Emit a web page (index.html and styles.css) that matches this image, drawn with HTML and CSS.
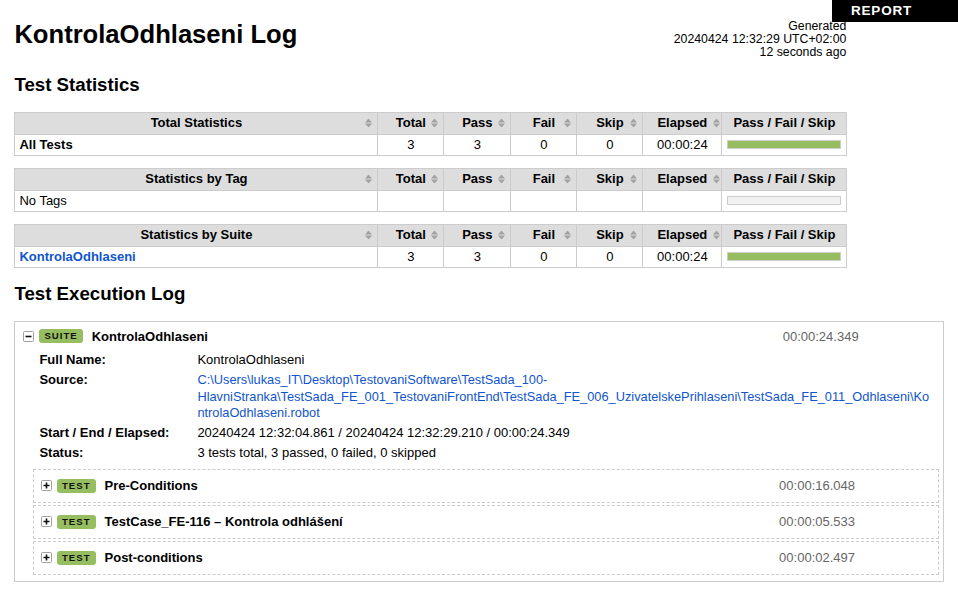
FILE: index.html
```html
<!DOCTYPE html>
<html lang="en">
<head>
<meta charset="utf-8">
<title>KontrolaOdhlaseni Log</title>
<link rel="stylesheet" href="styles.css">
</head>
<body>
<div class="top-right"><a class="report-link" href="#">REPORT</a></div>

<div class="header">
  <h1 class="title">KontrolaOdhlaseni Log</h1>
  <div class="generated">Generated<br>20240424 12:32:29 UTC+02:00<br>12 seconds ago</div>
</div>

<h2 class="section-title">Test Statistics</h2>

<table class="statistics">
  <colgroup><col class="c-name"><col class="c-stat"><col class="c-stat2"><col class="c-stat"><col class="c-stat"><col class="c-elapsed"><col class="c-graph"></colgroup>
  <thead>
    <tr>
      <th>Total Statistics<svg class="sort" viewBox="0 0 7 9" width="7" height="9"><path d="M0 4 L3.5 0 L7 4 Z M0 5 L3.5 9 L7 5 Z"/></svg></th>
      <th>Total<svg class="sort" viewBox="0 0 7 9" width="7" height="9"><path d="M0 4 L3.5 0 L7 4 Z M0 5 L3.5 9 L7 5 Z"/></svg></th>
      <th>Pass<svg class="sort" viewBox="0 0 7 9" width="7" height="9"><path d="M0 4 L3.5 0 L7 4 Z M0 5 L3.5 9 L7 5 Z"/></svg></th>
      <th>Fail<svg class="sort" viewBox="0 0 7 9" width="7" height="9"><path d="M0 4 L3.5 0 L7 4 Z M0 5 L3.5 9 L7 5 Z"/></svg></th>
      <th>Skip<svg class="sort" viewBox="0 0 7 9" width="7" height="9"><path d="M0 4 L3.5 0 L7 4 Z M0 5 L3.5 9 L7 5 Z"/></svg></th>
      <th>Elapsed<svg class="sort sort-tight" viewBox="0 0 7 9" width="7" height="9"><path d="M0 4 L3.5 0 L7 4 Z M0 5 L3.5 9 L7 5 Z"/></svg></th>
      <th>Pass / Fail / Skip</th>
    </tr>
  </thead>
  <tbody>
    <tr>
      <td class="stat-name bold">All Tests</td>
      <td class="num">3</td><td class="num">3</td><td class="num">0</td><td class="num">0</td><td class="num">00:00:24</td>
      <td><div class="graph"><div class="pass-bar"></div></div></td>
    </tr>
  </tbody>
</table>

<table class="statistics">
  <colgroup><col class="c-name"><col class="c-stat"><col class="c-stat2"><col class="c-stat"><col class="c-stat"><col class="c-elapsed"><col class="c-graph"></colgroup>
  <thead>
    <tr>
      <th>Statistics by Tag<svg class="sort" viewBox="0 0 7 9" width="7" height="9"><path d="M0 4 L3.5 0 L7 4 Z M0 5 L3.5 9 L7 5 Z"/></svg></th>
      <th>Total<svg class="sort" viewBox="0 0 7 9" width="7" height="9"><path d="M0 4 L3.5 0 L7 4 Z M0 5 L3.5 9 L7 5 Z"/></svg></th>
      <th>Pass<svg class="sort" viewBox="0 0 7 9" width="7" height="9"><path d="M0 4 L3.5 0 L7 4 Z M0 5 L3.5 9 L7 5 Z"/></svg></th>
      <th>Fail<svg class="sort" viewBox="0 0 7 9" width="7" height="9"><path d="M0 4 L3.5 0 L7 4 Z M0 5 L3.5 9 L7 5 Z"/></svg></th>
      <th>Skip<svg class="sort" viewBox="0 0 7 9" width="7" height="9"><path d="M0 4 L3.5 0 L7 4 Z M0 5 L3.5 9 L7 5 Z"/></svg></th>
      <th>Elapsed<svg class="sort sort-tight" viewBox="0 0 7 9" width="7" height="9"><path d="M0 4 L3.5 0 L7 4 Z M0 5 L3.5 9 L7 5 Z"/></svg></th>
      <th>Pass / Fail / Skip</th>
    </tr>
  </thead>
  <tbody>
    <tr>
      <td class="stat-name">No Tags</td>
      <td></td><td></td><td></td><td></td><td></td>
      <td><div class="graph empty"></div></td>
    </tr>
  </tbody>
</table>

<table class="statistics">
  <colgroup><col class="c-name"><col class="c-stat"><col class="c-stat2"><col class="c-stat"><col class="c-stat"><col class="c-elapsed"><col class="c-graph"></colgroup>
  <thead>
    <tr>
      <th>Statistics by Suite<svg class="sort" viewBox="0 0 7 9" width="7" height="9"><path d="M0 4 L3.5 0 L7 4 Z M0 5 L3.5 9 L7 5 Z"/></svg></th>
      <th>Total<svg class="sort" viewBox="0 0 7 9" width="7" height="9"><path d="M0 4 L3.5 0 L7 4 Z M0 5 L3.5 9 L7 5 Z"/></svg></th>
      <th>Pass<svg class="sort" viewBox="0 0 7 9" width="7" height="9"><path d="M0 4 L3.5 0 L7 4 Z M0 5 L3.5 9 L7 5 Z"/></svg></th>
      <th>Fail<svg class="sort" viewBox="0 0 7 9" width="7" height="9"><path d="M0 4 L3.5 0 L7 4 Z M0 5 L3.5 9 L7 5 Z"/></svg></th>
      <th>Skip<svg class="sort" viewBox="0 0 7 9" width="7" height="9"><path d="M0 4 L3.5 0 L7 4 Z M0 5 L3.5 9 L7 5 Z"/></svg></th>
      <th>Elapsed<svg class="sort sort-tight" viewBox="0 0 7 9" width="7" height="9"><path d="M0 4 L3.5 0 L7 4 Z M0 5 L3.5 9 L7 5 Z"/></svg></th>
      <th>Pass / Fail / Skip</th>
    </tr>
  </thead>
  <tbody>
    <tr>
      <td class="stat-name bold"><a class="link" href="#">KontrolaOdhlaseni</a></td>
      <td class="num">3</td><td class="num">3</td><td class="num">0</td><td class="num">0</td><td class="num">00:00:24</td>
      <td><div class="graph"><div class="pass-bar"></div></div></td>
    </tr>
  </tbody>
</table>

<h2 class="section-title">Test Execution Log</h2>

<div class="suite">
  <div class="element-header suite-header">
    <svg class="toggle" viewBox="0 0 11 11" width="11" height="11"><rect x="0.5" y="0.5" width="10" height="10" rx="1" fill="#fff" stroke="#a0a0a0"/><path d="M2.5 5.5 H8.5" stroke="#111" stroke-width="1.6"/></svg>
    <span class="label">SUITE</span>
    <span class="name">KontrolaOdhlaseni</span>
    <span class="elapsed">00:00:24.349</span>
  </div>
  <div class="metadata">
    <div class="meta-key">Full Name:</div>
    <div class="meta-val">KontrolaOdhlaseni</div>
    <div class="meta-key">Source:</div>
    <div class="meta-val"><a class="link source-link" href="#">C:\Users\lukas_IT\Desktop\TestovaniSoftware\TestSada_100-HlavniStranka\TestSada_FE_001_TestovaniFrontEnd\TestSada_FE_006_UzivatelskePrihlaseni\TestSada_FE_011_Odhlaseni\KontrolaOdhlaseni.robot</a></div>
    <div class="meta-key">Start / End / Elapsed:</div>
    <div class="meta-val">20240424 12:32:04.861 / 20240424 12:32:29.210 / 00:00:24.349</div>
    <div class="meta-key">Status:</div>
    <div class="meta-val">3 tests total, 3 passed, 0 failed, 0 skipped</div>
  </div>
  <div class="children">
    <div class="test">
      <div class="element-header test-header">
        <svg class="toggle" viewBox="0 0 11 11" width="11" height="11"><rect x="0.5" y="0.5" width="10" height="10" rx="1" fill="#fff" stroke="#a0a0a0"/><path d="M2.5 5.5 H8.5 M5.5 2.5 V8.5" stroke="#111" stroke-width="1.6"/></svg>
        <span class="label">TEST</span>
        <span class="name">Pre-Conditions</span>
        <span class="elapsed">00:00:16.048</span>
      </div>
    </div>
    <div class="test">
      <div class="element-header test-header">
        <svg class="toggle" viewBox="0 0 11 11" width="11" height="11"><rect x="0.5" y="0.5" width="10" height="10" rx="1" fill="#fff" stroke="#a0a0a0"/><path d="M2.5 5.5 H8.5 M5.5 2.5 V8.5" stroke="#111" stroke-width="1.6"/></svg>
        <span class="label">TEST</span>
        <span class="name">TestCase_FE-116 – Kontrola odhlášení</span>
        <span class="elapsed">00:00:05.533</span>
      </div>
    </div>
    <div class="test">
      <div class="element-header test-header">
        <svg class="toggle" viewBox="0 0 11 11" width="11" height="11"><rect x="0.5" y="0.5" width="10" height="10" rx="1" fill="#fff" stroke="#a0a0a0"/><path d="M2.5 5.5 H8.5 M5.5 2.5 V8.5" stroke="#111" stroke-width="1.6"/></svg>
        <span class="label">TEST</span>
        <span class="name">Post-conditions</span>
        <span class="elapsed">00:00:02.497</span>
      </div>
    </div>
  </div>
</div>
</body>
</html>
```

FILE: styles.css
```css
html {
  font-family: "Liberation Sans", Arial, Helvetica, sans-serif;
}
body {
  margin: 8px;
  padding: 0 6.4px;
  font-size: 13px;
  color: #000;
  background: #fff;
}

.top-right {
  position: fixed;
  top: 0;
  right: 0;
  width: 126px;
  z-index: 10;
}
.report-link {
  display: block;
  height: 22px;
  line-height: 22px;
  background: #000;
  color: #fff;
  text-decoration: none;
  font-weight: bold;
  font-size: 13.5px;
  letter-spacing: 0.8px;
  padding-left: 19px;
}

.header {
  display: flex;
  justify-content: space-between;
  align-items: flex-start;
  width: 832px;
  padding-top: 12px;
  height: 39px;
}
.title {
  margin: 0;
  font-size: 25.6px;
  font-weight: bold;
  line-height: normal;
}
.generated {
  font-size: 12.3px;
  line-height: 13px;
  text-align: right;
  white-space: nowrap;
}

.section-title {
  font-size: 18.7px;
  font-weight: bold;
  line-height: normal;
  margin: 15px 0 16px;
}

.statistics {
  width: 832px;
  table-layout: fixed;
  border-collapse: collapse;
  empty-cells: show;
  margin-bottom: 12.5px;
}
.c-name { width: 363px; }
.c-stat { width: 66px; }
.c-stat2 { width: 67px; }
.c-elapsed { width: 79px; }
.c-graph { width: 125px; }

.statistics th,
.statistics td {
  border: 1px solid #ccc;
}
.statistics th {
  position: relative;
  background: #ddd;
  font-weight: bold;
  text-align: center;
  padding: 3px 4px;
  line-height: 14.5px;
  white-space: nowrap;
}
.statistics td {
  padding: 2px 5px;
  line-height: 16px;
}
.statistics td.stat-name {
  padding-left: 4px;
}
.sort {
  position: absolute;
  right: 5px;
  top: 50%;
  transform: translateY(-50%);
  fill: #a2a2a2;
}
.sort-tight { right: 1.5px; }
.num { text-align: center; }
.bold { font-weight: bold; }

.graph {
  display: block;
  height: 7px;
  border: 1px solid #ccc;
  background: #f2f2f2;
}
.pass-bar {
  height: 100%;
  width: 100%;
  background: #97bd61;
}

.link {
  color: #1155cc;
  text-decoration: none;
}

.suite {
  border: 1px solid #ccc;
}
.element-header {
  display: flex;
  align-items: center;
}
.suite-header {
  height: 29px;
  padding-left: 8px;
}
.test-header {
  height: 32px;
  padding-left: 6.6px;
}
.toggle {
  flex: none;
  margin-right: 5px;
}
.label {
  flex: none;
  height: 14px;
  line-height: 14px;
  padding: 0 5px;
  font-size: 9.6px;
  font-weight: bold;
  letter-spacing: 1px;
  background: #97bd61;
  color: #111;
  border-radius: 3px;
}
.name {
  margin-left: 9px;
  font-weight: bold;
}
.elapsed {
  margin-left: auto;
  color: #666;
}
.suite-header .elapsed { padding-right: 84px; }
.test-header .elapsed { padding-right: 83px; }

.metadata {
  display: grid;
  grid-template-columns: 158px minmax(0, 1fr);
  margin: 0 9px 0 24px;
  line-height: 16.5px;
}
.meta-key,
.meta-val {
  padding: 1.75px 0;
}
.meta-key {
  font-weight: bold;
}
.meta-val {
  overflow-wrap: break-word;
}
.source-link {
  font-size: 12.8px;
}

.children {
  display: flex;
  flex-direction: column;
  gap: 2px;
  margin: 0 3.6px 0 18px;
  padding: 5px 0 6px;
}
.test {
  border: 1px dashed #ccc;
}
```
